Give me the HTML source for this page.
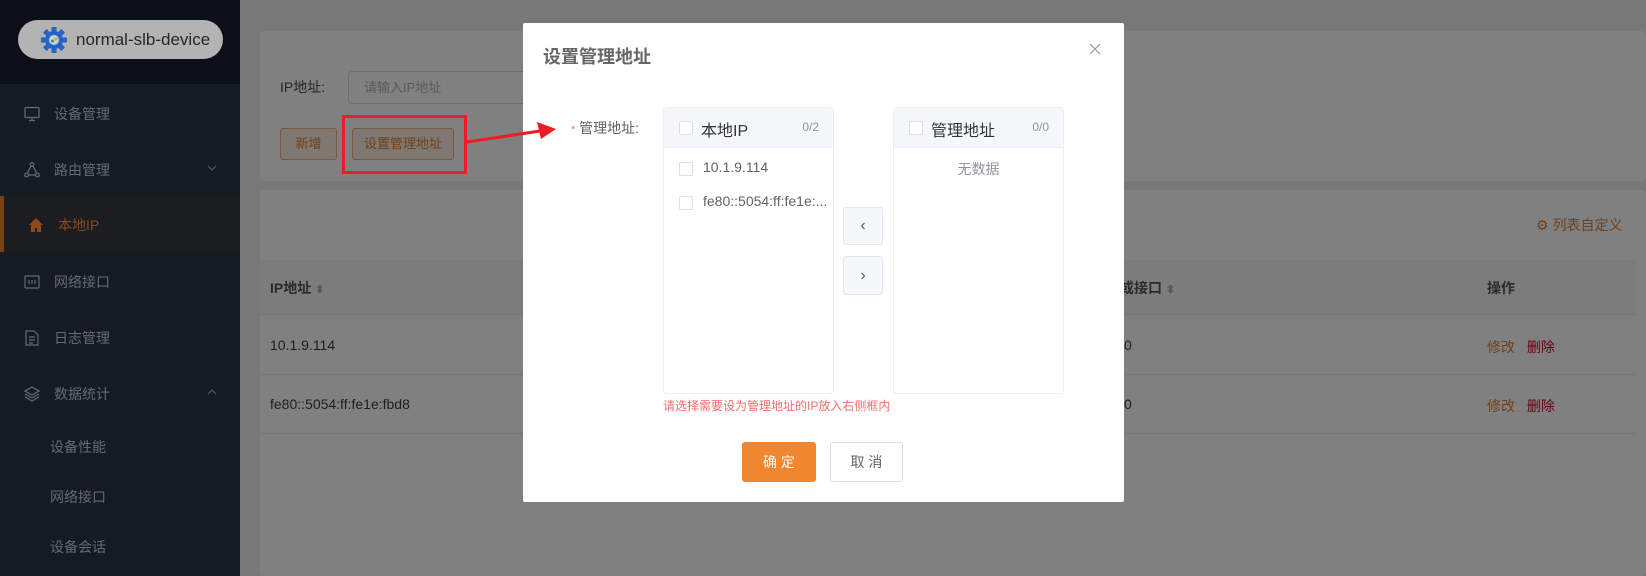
<!DOCTYPE html>
<html><head><meta charset="utf-8"><style>
*{margin:0;padding:0;box-sizing:border-box}
body{width:1646px;height:576px;overflow:hidden;position:relative;background:#787879;font-family:"Liberation Sans","Noto Sans CJK SC",sans-serif;font-size:14px;color:#303133}
.abs{position:absolute}
.side{left:0;top:0;width:240px;height:576px;background:#151a23}
.logo{left:0;top:0;width:240px;height:84px;background:#0c0f17}
.pill{left:18px;top:20px;width:205px;height:39px;border-radius:20px;background:#b3b3b3;color:#262626;font-size:17px;line-height:39px;padding-left:58px}
.mi{left:0;width:240px;color:#666a72;font-size:14px}
.mi span{position:absolute;left:54px}
.card{background:#808080;border-radius:4px}
.btn{border:1px solid #7a5a43;background:#7f7872;color:#70401a;font-size:13px;text-align:center;border-radius:3px}
.modal{left:523px;top:23px;width:601px;height:479px;background:#fff;border-radius:2px}
.panel{border:1px solid #ebeef5;border-radius:4px;background:#fff}
.ph{height:40px;background:#f5f7fa;border-bottom:1px solid #ebeef5;position:relative}
.cb{position:absolute;width:14px;height:14px;border:1px solid #dcdfe6;border-radius:2px;background:#fff}
</style></head><body>
<div class="abs side"></div>
<div class="abs logo"></div>
<div class="abs pill">normal-slb-device
<svg class="abs" style="left:22px;top:6px" width="28" height="28" viewBox="0 0 28 28"><g fill="#2563c4"><circle cx="14" cy="14" r="9"/><rect x="11.5" y="1" width="5" height="26"/><rect x="1" y="11.5" width="26" height="5"/><rect x="11.5" y="1" width="5" height="26" transform="rotate(45 14 14)"/><rect x="11.5" y="1" width="5" height="26" transform="rotate(-45 14 14)"/></g><circle cx="14" cy="14" r="5" fill="#c8d0dc"/><circle cx="12.5" cy="15" r="1.5" fill="#3b9a4a"/><circle cx="16" cy="13" r="1.5" fill="#e0a020"/></svg></div>
<div class="abs mi" style="top:104px;height:20px"><svg class="abs" style="left:24px;top:2px" width="16" height="16" viewBox="0 0 16 16" fill="none" stroke="#666a72" stroke-width="1.3"><rect x="1" y="1.5" width="14" height="10" rx="1"/><path d="M5 14.5h6M8 11.5v3"/></svg><span>设备管理</span></div>
<div class="abs mi" style="top:160px;height:20px"><svg class="abs" style="left:24px;top:2px" width="16" height="16" viewBox="0 0 16 16" fill="none" stroke="#666a72" stroke-width="1.2"><circle cx="8" cy="2.5" r="1.8"/><circle cx="2.5" cy="13" r="1.8"/><circle cx="13.5" cy="13" r="1.8"/><path d="M7 4 3.3 11.3M9 4l3.7 7.3M4.3 13h7.4"/></svg><span>路由管理</span><svg class="abs" style="left:207px;top:4px" width="10" height="8" viewBox="0 0 10 8" fill="none" stroke="#555" stroke-width="1.2"><path d="M1 2l4 4 4-4"/></svg></div>
<div class="abs" style="left:0;top:196px;width:240px;height:56px;background:#1c1d21"></div>
<div class="abs" style="left:0;top:196px;width:4px;height:56px;background:#7a4212"></div>
<div class="abs mi" style="top:215px;height:20px;color:#8a4a1a"><svg class="abs" style="left:28px;top:2px" width="16" height="16" viewBox="0 0 16 16"><path d="M8 1 1 8h2v7h4v-4h2v4h4V8h2z" fill="#8a4a1a"/></svg><span style="left:58px">本地IP</span></div>
<div class="abs mi" style="top:272px;height:20px"><svg class="abs" style="left:24px;top:2px" width="16" height="16" viewBox="0 0 16 16" fill="none" stroke="#666a72" stroke-width="1.2"><rect x="1" y="2" width="14" height="12" rx="1"/><path d="M5 6v4M8 6v4M11 6v4"/></svg><span>网络接口</span></div>
<div class="abs mi" style="top:328px;height:20px"><svg class="abs" style="left:25px;top:2px" width="14" height="16" viewBox="0 0 14 16" fill="none" stroke="#666a72" stroke-width="1.2"><path d="M1 1h8l4 4v10H1z M4 7h6M4 10h6M4 13h4"/></svg><span>日志管理</span></div>
<div class="abs mi" style="top:384px;height:20px"><svg class="abs" style="left:24px;top:2px" width="16" height="16" viewBox="0 0 16 16" fill="none" stroke="#666a72" stroke-width="1.2"><path d="M8 1 15 5 8 9 1 5z M1 8l7 4 7-4M1 11l7 4 7-4"/></svg><span>数据统计</span><svg class="abs" style="left:207px;top:4px" width="10" height="8" viewBox="0 0 10 8" fill="none" stroke="#555" stroke-width="1.2"><path d="M1 6l4-4 4 4"/></svg></div>
<div class="abs mi" style="top:437px"><span style="left:50px">设备性能</span></div>
<div class="abs mi" style="top:487px"><span style="left:50px">网络接口</span></div>
<div class="abs mi" style="top:537px"><span style="left:50px">设备会话</span></div>

<div class="abs card" style="left:260px;top:31px;width:1386px;height:150px"></div>
<div class="abs" style="left:280px;top:77px;font-size:14px;color:#262626">IP地址:</div>
<div class="abs" style="left:348px;top:71px;width:200px;height:33px;border:1px solid #6e6e6e;border-radius:4px;color:#5a5a5a;font-size:13px;line-height:31px;padding-left:15px;background:#808080">请输入IP地址</div>
<div class="abs btn" style="left:280px;top:128px;width:57px;height:32px;line-height:30px">新增</div>
<div class="abs btn" style="left:352px;top:128px;width:102px;height:32px;line-height:30px">设置管理地址</div>
<div class="abs card" style="left:260px;top:190px;width:1386px;height:386px"></div>
<div class="abs" style="left:1536px;top:215px;color:#70401a;font-size:14px">⚙ 列表自定义</div>
<div class="abs" style="left:260px;top:260px;width:1376px;height:55px;background:#7c7c7c;border-bottom:1px solid #757575"></div>
<div class="abs" style="left:270px;top:278px;font-weight:bold;color:#2a2a2a">IP地址 <span style="color:#5a5a5a;font-size:11px">⬍</span></div>
<div class="abs" style="left:1120px;top:278px;font-weight:bold;color:#2a2a2a">或接口 <span style="color:#5a5a5a;font-size:11px">⬍</span></div>
<div class="abs" style="left:1487px;top:278px;font-weight:bold;color:#2a2a2a">操作</div>
<div class="abs" style="left:260px;top:374px;width:1376px;height:1px;background:#757575"></div>
<div class="abs" style="left:260px;top:433px;width:1376px;height:1px;background:#757575"></div>
<div class="abs" style="left:270px;top:337px;color:#1e1e20">10.1.9.114</div>
<div class="abs" style="left:270px;top:396px;color:#1e1e20">fe80::5054:ff:fe1e:fbd8</div>
<div class="abs" style="left:1124px;top:337px;color:#1e1e20">0</div><div class="abs" style="left:1124px;top:396px;color:#1e1e20">0</div>
<div class="abs" style="left:1487px;top:337px;color:#70401a">修改 <span style="color:#680010;margin-left:8px">删除</span></div>
<div class="abs" style="left:1487px;top:396px;color:#70401a">修改 <span style="color:#680010;margin-left:8px">删除</span></div>

<div class="abs modal" style="color:#606266">
<div class="abs" style="left:20px;top:20px;font-size:18px;font-weight:bold;color:#666">设置管理地址</div>
<svg class="abs" style="left:566px;top:20px" width="12" height="12" viewBox="0 0 12 12" stroke="#999" stroke-width="1.2"><path d="M1 1l10 10M11 1 1 11"/></svg>
<div class="abs" style="left:48px;top:95px;font-size:14px;color:#606266"><span style="color:#f56c6c;font-size:11px">*</span> 管理地址:</div>
<div class="abs panel" style="left:140px;top:84px;width:171px;height:287px">
 <div class="ph"><div class="cb" style="left:15px;top:13px"></div><div class="abs" style="left:37px;top:9px;font-size:16px;color:#333">本地IP</div><div class="abs" style="right:14px;top:12px;font-size:12px;color:#909399">0/2</div></div>
 <div class="cb" style="left:15px;top:54px"></div><div class="abs" style="left:39px;top:51px;font-size:14px">10.1.9.114</div>
 <div class="cb" style="left:15px;top:88px"></div><div class="abs" style="left:39px;top:85px;font-size:14px;white-space:nowrap">fe80::5054:ff:fe1e:...</div>
</div>
<div class="abs" style="left:320px;top:184px;width:40px;height:38px;background:#f5f7fa;border:1px solid #e4e7ed;border-radius:3px;text-align:center;line-height:36px;color:#555;font-size:16px">‹</div>
<div class="abs" style="left:320px;top:233px;width:40px;height:39px;background:#f5f7fa;border:1px solid #e4e7ed;border-radius:3px;text-align:center;line-height:37px;color:#555;font-size:16px">›</div>
<div class="abs panel" style="left:370px;top:84px;width:171px;height:287px">
 <div class="ph"><div class="cb" style="left:15px;top:13px"></div><div class="abs" style="left:37px;top:9px;font-size:16px;color:#333">管理地址</div><div class="abs" style="right:14px;top:12px;font-size:12px;color:#909399">0/0</div></div>
 <div class="abs" style="left:0;width:100%;top:51px;text-align:center;color:#909399;font-size:14px">无数据</div>
</div>
<div class="abs" style="left:140px;top:374px;color:#f56c6c;font-size:12px">请选择需要设为管理地址的IP放入右侧框内</div>
<div class="abs" style="left:219px;top:419px;width:74px;height:40px;background:#f0862f;border-radius:3px;color:#fff;text-align:center;line-height:40px;font-size:14px">确 定</div>
<div class="abs" style="left:307px;top:419px;width:73px;height:40px;border:1px solid #dcdfe6;border-radius:3px;color:#606266;text-align:center;line-height:38px;font-size:14px">取 消</div>
</div>
<div class="abs" style="left:342px;top:115px;width:125px;height:59px;border:3px solid #ee1c24"></div>
<svg class="abs" style="left:465px;top:118px" width="95" height="30" viewBox="0 0 95 30"><path d="M2 24 75 13" stroke="#ee1c24" stroke-width="3"/><path d="M91 11 72 4 76 21z" fill="#ee1c24"/></svg>
</body></html>
